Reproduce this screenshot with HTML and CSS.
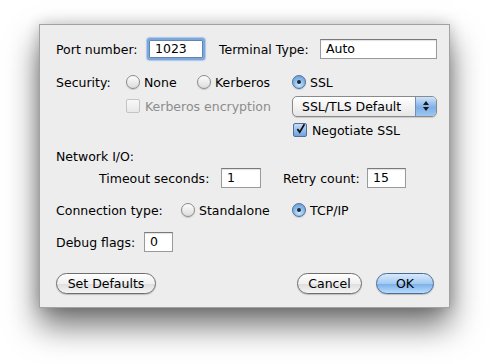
FILE: index.html
```html
<!DOCTYPE html><html><head><meta charset="utf-8">
<title>Connection settings</title>
<link rel="stylesheet" href="styles.css">
</head><body>

<div class="dialog">
	<div class="row r1">
		<span class="lab w-port">Port number:</span>
		<span class="field focus w58">1023</span>
		<span class="lab w-term">Terminal Type:</span>
		<span class="field w117">Auto</span>
	</div>

	<div class="row r2">
		<span class="lab w70">Security:</span>
		<span class="opt w71"><i class="radio"></i>None</span>
		<span class="opt w95"><i class="radio"></i>Kerberos</span>
		<span class="opt"><i class="radio on"></i>SSL</span>
	</div>

	<div class="row r3">
		<span class="opt off ml70 w166"><i class="check dis"></i>Kerberos encryption</span>
		<span class="popup">SSL/TLS Default<b class="arrows"><svg width="8" height="12" viewBox="0 0 8 12"><path d="M4 1 L7 5 L1 5 Z M4 11 L7 7 L1 7 Z" fill="#1a1a1a"/></svg></b></span>
	</div>

	<div class="row r4">
		<span class="opt ml237"><i class="check on"><svg width="14" height="14" viewBox="0 0 14 14"><path d="M3 7 L6 11 L12 1" fill="none" stroke="#111" stroke-width="2.2"/></svg></i>Negotiate SSL</span>
	</div>

	<div class="row r5">
		<span class="lab">Network I/O:</span>
	</div>

	<div class="row r6">
		<span class="lab ml43 w-tmo">Timeout seconds:</span>
		<span class="field w40">1</span>
		<span class="lab ml22 w-rty">Retry count:</span>
		<span class="field w39">15</span>
	</div>

	<div class="row r7">
		<span class="lab w125">Connection type:</span>
		<span class="opt w111"><i class="radio"></i>Standalone</span>
		<span class="opt"><i class="radio on"></i>TCP/IP</span>
	</div>

	<div class="row r8">
		<span class="lab w88">Debug flags:</span>
		<span class="field w29">0</span>
	</div>

	<div class="row buttons">
		<span class="btn w100">Set Defaults</span>
		<span class="spacer"></span>
		<span class="btn w65">Cancel</span>
		<span class="btn def w58">OK</span>
	</div>
</div>

</body></html>
```

FILE: styles.css
```css
body {
	margin: 0;
	min-height: 364px;
	background: #fff;
	font-family: "DejaVu Sans", "Liberation Sans", sans-serif;
	font-size: 12.5px;
	color: #000;
	overflow: hidden;
}
.dialog {
	margin: 24px 0 0 39px;
	width: 411px;
	height: 284px;
	box-sizing: border-box;
	border: 1px solid #a2a2a2;
	background: #ededed;
	box-shadow: 0 18px 30px rgba(0,0,0,.55), 0 0 14px rgba(0,0,0,.2);
	padding: 13px 0 0 16px;
}
.row {
	display: flex;
	align-items: center;
	height: 20px;
}
.row > * { flex-shrink: 0; }
.r1 { height: 22px; }
.r2 { margin-top: 12px; }
.r3 { margin-top: 3px; height: 22px; }
.r4 { margin-top: 3px; }
.r5 { margin-top: 6px; }
.r6 { margin-top: 1px; height: 22px; }
.r7 { margin-top: 11px; }
.r8 { margin-top: 12px; }
.buttons { margin-top: 21px; height: 21px; padding-right: 15px; }

.lab { white-space: nowrap; }
.w-port { width: 91px; }
.w-term { width: 101px; margin-left: 14px; }
.w-tmo { width: 122px; }
.w-rty { width: 84px; }
.w70 { width: 70px; }
.w71 { width: 71px; }
.w95 { width: 95px; }
.w88 { width: 88px; }
.w125 { width: 125px; }
.w111 { width: 111px; }
.w166 { width: 166px; }
.ml70 { margin-left: 70px; }
.ml237 { margin-left: 237px; }
.ml43 { margin-left: 43px; }
.ml22 { margin-left: 22px; }

.field {
	box-sizing: border-box;
	height: 20px;
	line-height: 18px;
	padding-left: 5px;
	background: #fff;
	border: 1px solid #9a9a9a;
	border-top-color: #7a7a7a;
	box-shadow: inset 0 1px 1px rgba(0,0,0,.12);
}
.field.focus {
	height: 22px;
	line-height: 18px;
	padding-left: 6px;
	border: 2px solid #7ea6d8;
	border-radius: 3px;
	box-shadow: 0 0 1px 1px #a9c6ea, inset 0 0 0 1px #5f84b6;
}
.w58 { width: 58px; }
.w117 { width: 117px; }
.w40 { width: 40px; }
.w39 { width: 39px; }
.w29 { width: 29px; }

.opt {
	display: flex;
	align-items: center;
	white-space: nowrap;
}
.opt.off { color: #8c8c8c; }
.radio {
	width: 14px;
	height: 14px;
	box-sizing: border-box;
	border-radius: 50%;
	border: 1px solid #8a8a8a;
	background: linear-gradient(#fdfdfd, #dcdcdc);
	box-shadow: 0 1px 1px rgba(0,0,0,.15);
	margin-right: 4px;
	position: relative;
}
.radio.on {
	border-color: #4f6f98;
	background: radial-gradient(circle at 50% 70%, #d4ebff 0, #8fbdeb 45%, #5d94d2 100%);
}
.radio.on::after {
	content: "";
	position: absolute;
	left: 4px;
	top: 4px;
	width: 4px;
	height: 4px;
	border-radius: 50%;
	background: #1a2a3a;
}
.check {
	width: 14px;
	height: 14px;
	box-sizing: border-box;
	border: 1px solid #8a8a8a;
	border-radius: 2px;
	background: linear-gradient(#fdfdfd, #dcdcdc);
	margin-right: 5px;
	display: flex;
	align-items: center;
	justify-content: center;
	overflow: visible;
}
.check.dis {
	border-color: #c4c4c4;
	background: linear-gradient(#f8f8f8, #e8e8e8);
}
.check.on {
	border-color: #4f6f98;
	background: linear-gradient(#c3ddf7, #6fa2dc);
}
.check.on svg { margin-top: -3px; margin-left: 1px; }

.popup {
	position: relative;
	box-sizing: border-box;
	width: 145px;
	height: 21px;
	line-height: 19px;
	padding-left: 9px;
	border: 1px solid #8a8a8a;
	border-radius: 5px;
	background: linear-gradient(#ffffff, #e6e6e6);
	box-shadow: 0 1px 1px rgba(0,0,0,.15);
	overflow: hidden;
}
.arrows {
	position: absolute;
	right: 0;
	top: 0;
	bottom: 0;
	width: 20px;
	border-left: 1px solid #6f8fb8;
	background: linear-gradient(#cfe4fa, #7fb0e6 55%, #9cc6f0);
	display: flex;
	align-items: center;
	justify-content: center;
}

.spacer { flex: 1; }
.btn {
	box-sizing: border-box;
	height: 21px;
	line-height: 19px;
	text-align: center;
	border: 1px solid #6e6e6e;
	border-radius: 11px;
	background: linear-gradient(#ffffff, #f0f0f0 50%, #dedede 51%, #f4f4f4);
	box-shadow: 0 1px 1px rgba(0,0,0,.2);
}
.btn.def {
	margin-left: 14px;
	border-color: #4b6a94;
	background: linear-gradient(#d8eafc, #a4cbf2 50%, #78aee8 51%, #b9dcfb);
}
.w100 { width: 100px; }
.w65 { width: 65px; }
.w58.btn { width: 58px; }
```
